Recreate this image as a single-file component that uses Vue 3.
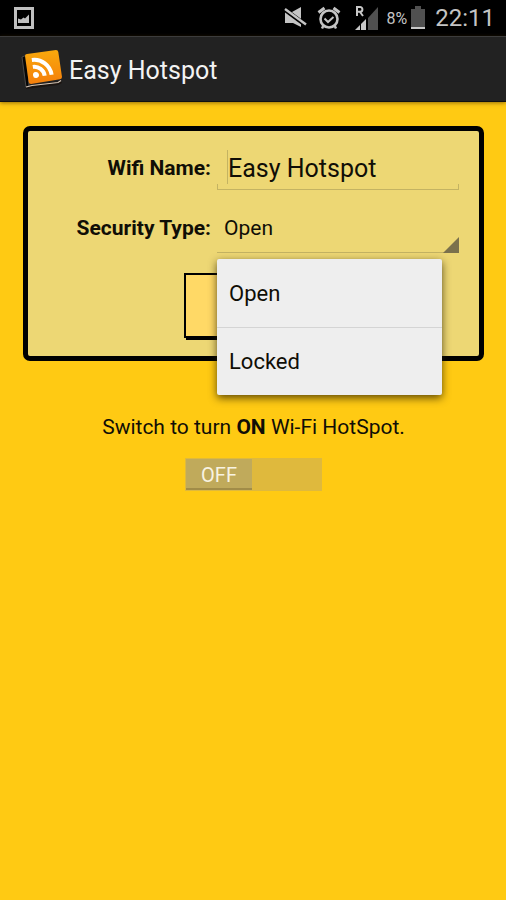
<script setup>
import { ref } from 'vue'

const name = ref('Easy Hotspot')
const security = ref('Open')
const options = ['Open', 'Locked']
const menuOpen = ref(true)
const enabled = ref(false)

function choose(option) {
  security.value = option
  menuOpen.value = false
}
</script>

<template>
  <div class="screen">
    <div class="status">
      <svg class="picture" width="20" height="22" viewBox="0 0 20 22">
        <rect x="1.500" y="1.500" width="17" height="19" fill="none" stroke="#c0c0c0" stroke-width="3" />
        <path d="M4 16V11.500l3 1 2.500-2 1.500 1 4-4V16z" fill="#c0c0c0" />
      </svg>
      <div class="indicators">
        <svg class="mute" width="24" height="22" viewBox="0 0 24 22">
          <path d="M1 5h7l9-5v20l-8-4H1z" fill="#c4c4c4" />
          <path d="M0 2l23 17" stroke="#000" stroke-width="4.500" />
          <path d="M1 2l21 15.500" stroke="#c4c4c4" stroke-width="2.400" />
        </svg>
        <svg class="alarm" width="24" height="24" viewBox="0 0 24 24" fill="none" stroke="#c4c4c4">
          <circle cx="12" cy="13" r="8.500" stroke-width="2.600" />
          <path d="M7.500 12.500l3.500 3.500 5.500-5" stroke-width="2" />
          <path d="M1.500 6.500l6-4.500M22.500 6.500l-6-4.500" stroke-width="3" />
          <path d="M6.500 19.500L5 22.500M17.500 19.500l1.500 3" stroke-width="2.500" />
        </svg>
        <svg class="signal" width="24" height="26" viewBox="0 0 24 26">
          <path d="M23 2v23H13V13z" fill="#505050" />
          <path d="M0 25l11-11v11z" fill="#c8c8c8" />
          <path d="M5.500 19v6" stroke="#000" stroke-width="1" />
          <path d="M2 11V2h3a2.200 2.200 0 0 1 0 4.800H2M5 7l3 4" fill="none" stroke="#c8c8c8" stroke-width="2" />
        </svg>
        <span class="percent">8%</span>
        <svg class="battery" width="14" height="24" viewBox="0 0 14 24">
          <path d="M0 3h4V0h6v3h4v18H0z" fill="#505050" />
          <path d="M0 21h14v2H0z" fill="#c8c8c8" />
        </svg>
        <span class="clock">22:11</span>
      </div>
    </div>

    <header class="bar">
      <svg width="44" height="40" viewBox="0 0 44 40">
        <defs>
          <linearGradient id="tile" x1="0" y1="0" x2="0" y2="1">
            <stop offset="0" stop-color="#f9a90c" />
            <stop offset="1" stop-color="#f57f0c" />
          </linearGradient>
        </defs>
        <path d="M1 7l5-2 2 31-3 1z" fill="#050505" stroke="#4c4a48" stroke-width="1" />
        <path d="M5 36l35-5 1 2-4 2-32 4z" fill="#1a1410" />
        <path d="M5 37L11 35.500l26-3 3-2" fill="none" stroke="#d8c8b8" stroke-width="1.200" />
        <path d="M4 6Q4 4 6 4L35 0q2 0 2.300 2L41 27q0 2-2 2.300L10 34q-2 0-2.300-2z" fill="url(#tile)" />
        <g transform="translate(15 25) rotate(-8)">
          <circle cx="0" cy="0" r="3" fill="#fff" />
          <path d="M-2-8.500A10.500 10.500 0 0 1 8.500 2M-2-15.500A17.500 17.500 0 0 1 15.500 2" fill="none" stroke="#fff" stroke-width="4" />
        </g>
      </svg>
      <h1>Easy Hotspot</h1>
    </header>

    <main>
      <form class="card" @submit.prevent>
        <div class="fields">
          <label for="wifi-name">Wifi Name:</label>
          <div class="entry">
            <input id="wifi-name" v-model="name" type="text" />
          </div>
          <label for="security">Security Type:</label>
          <div class="picker">
            <select id="security" v-model="security">
              <option v-for="option in options" :key="option">{{ option }}</option>
            </select>
            <div v-if="menuOpen" class="menu">
              <button v-for="option in options" :key="option" type="button" @click="choose(option)">
                {{ option }}
              </button>
            </div>
          </div>
        </div>
        <button class="save" type="submit"></button>
      </form>

      <p>Switch to turn <b>ON</b> Wi-Fi HotSpot.</p>
      <button class="switch" :class="{ on: enabled }" type="button" role="switch" :aria-checked="enabled" @click="enabled = !enabled">
        <span>{{ enabled ? 'ON' : 'OFF' }}</span>
      </button>
    </main>
  </div>
</template>

<style>
body {
  margin: 0;
  background: #ffca13;
}
</style>

<style scoped>
.screen {
  min-height: 100vh;
  background: #ffca13;
  font-family: Roboto, sans-serif;
  color: #100e06;
}
button,
input,
select {
  box-sizing: border-box;
  margin: 0;
  font-family: inherit;
  color: inherit;
  border: 0;
  border-radius: 0;
  outline: 0;
}
.status {
  display: flex;
  align-items: center;
  justify-content: space-between;
  height: 36px;
  padding: 0 11px 0 14px;
  background: #000;
  color: #c4c4c4;
}
.indicators {
  display: flex;
  align-items: center;
}
.mute {
  margin-right: 9px;
}
.alarm {
  margin-right: 14px;
}
.signal {
  margin-right: 8px;
}
.percent {
  margin-right: 4px;
  font-size: 16px;
}
.battery {
  margin-right: 10px;
}
.clock {
  font-size: 24px;
}
.bar {
  display: flex;
  align-items: center;
  gap: 4px;
  box-sizing: border-box;
  height: 66px;
  padding: 2px 21px 0;
  border-top: 1px solid #3c3c3c;
  border-bottom: 1px solid #111;
  background: #222;
  box-shadow: 0 1px 4px rgba(80, 50, 0, 0.6);
}
h1 {
  margin: 0;
  font-size: 25px;
  font-weight: 400;
  color: #f3f3f3;
}
main {
  display: flex;
  flex-direction: column;
  align-items: center;
  padding: 24px 22px 24px 23px;
}
.card {
  display: flex;
  flex-direction: column;
  align-items: center;
  align-self: stretch;
  padding: 15px 20px 16px;
  border: 5px solid #000;
  border-radius: 7px;
  background: #edd774;
}
.fields {
  display: grid;
  grid-template-columns: 163fr 242fr;
  gap: 13px 6px;
  align-items: center;
  align-self: stretch;
}
label {
  text-align: right;
  font-size: 21px;
  font-weight: 700;
  white-space: nowrap;
}
.entry {
  border-bottom: 1px solid #c4b362;
  background:
    linear-gradient(#c4b362, #c4b362) left bottom / 1px 5px no-repeat,
    linear-gradient(#c4b362, #c4b362) right bottom / 1px 5px no-repeat,
    linear-gradient(#c4b362, #c4b362) 10px 4px / 1px 34px no-repeat;
}
.entry input {
  display: block;
  width: 100%;
  height: 43px;
  padding: 2px 11px 0;
  background: transparent;
  font-size: 25px;
}
.picker {
  position: relative;
}
.picker::after {
  content: '';
  position: absolute;
  right: 0;
  bottom: 0;
  border-bottom: 16px solid #7b714c;
  border-left: 16px solid transparent;
  pointer-events: none;
}
select {
  display: block;
  width: 100%;
  height: 50px;
  padding: 0 7px;
  appearance: none;
  border-bottom: 1px solid #c4b362;
  background: transparent;
  font-size: 21px;
}
.menu {
  position: absolute;
  z-index: 1;
  top: 56px;
  left: 0;
  right: 17px;
  border-radius: 2px;
  background: #eee;
  box-shadow: 0 3px 8px rgba(40, 30, 0, 0.75);
}
.menu button {
  display: block;
  width: 100%;
  height: 68px;
  padding: 0 12px;
  background: transparent;
  font-size: 22px;
  text-align: left;
}
.menu button + button {
  border-top: 1px solid #d4d4d4;
}
.save {
  width: 140px;
  height: 65px;
  margin: 20px 0 2px;
  border: 2px solid #000;
  background: #ffd966;
  box-shadow: 2px 2px #000;
}
p {
  margin: 52px 0 17px;
  font-size: 21px;
  line-height: 28px;
}
.switch {
  display: flex;
  width: 137px;
  height: 33px;
  padding: 1px;
  background: #dfb93d;
}
.switch.on {
  justify-content: flex-end;
}
.switch span {
  box-sizing: border-box;
  width: 66px;
  height: 31px;
  border-bottom: 2px solid #a18c48;
  background: #c0aa5b;
  color: #f8f3e2;
  font-size: 20px;
  line-height: 32px;
  text-align: center;
}
</style>
